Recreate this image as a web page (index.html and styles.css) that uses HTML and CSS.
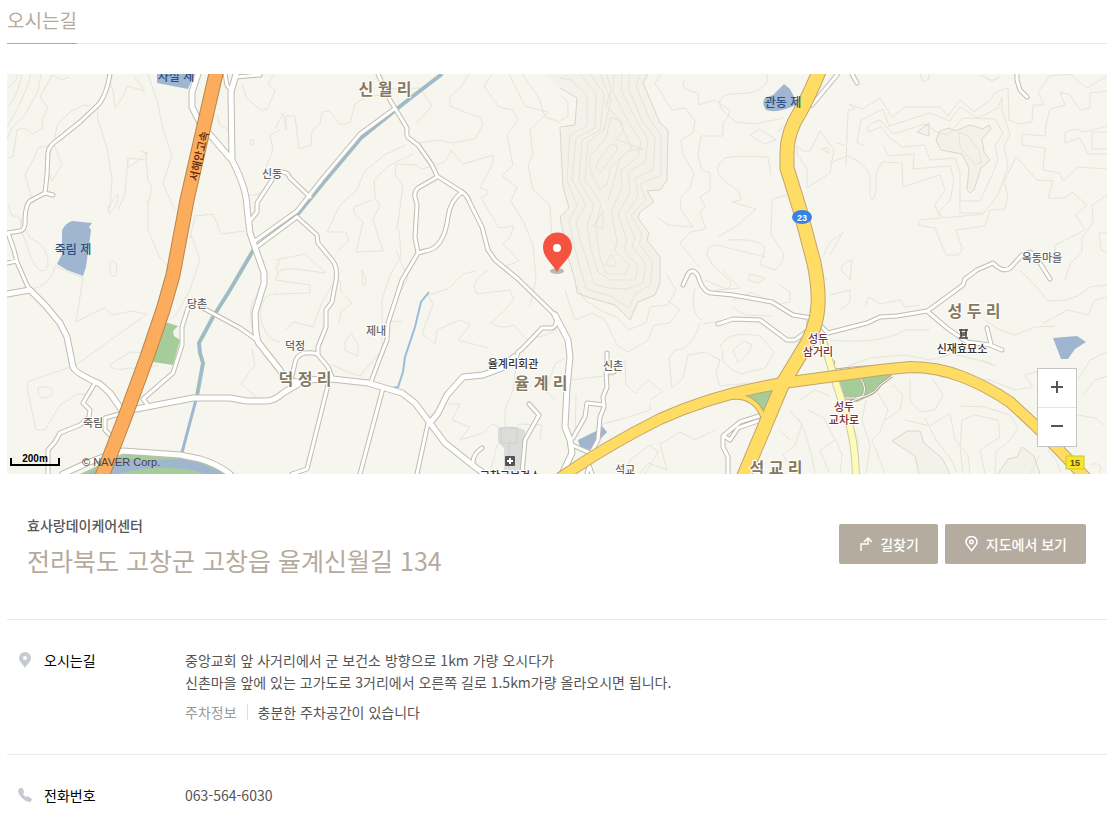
FILE: index.html
```html
<!DOCTYPE html>
<html lang="ko">

<head>
    <meta charset="UTF-8">
    <meta name="viewport" content="width=device-width, initial-scale=1.0">
    <title>오시는길</title>
    <link rel="stylesheet" href="styles.css">
</head>

<body>
    <header class="page-header">
        <h1 class="page-title">오시는길</h1>
    </header>

    <div class="map">
        <svg class="map-canvas" viewBox="7 74 1100 400" preserveAspectRatio="xMidYMid slice" role="img" aria-label="지도">
            <!-- hills -->
            <path class="hill" d="M560 88L577 98L575 125L565 125L560 133L563 187L569 208L560 217L568 257L575 280L577 293L587 297L615 305L630 320L638 302L655 295L660 283V257L647 240L649 233L638 218L640 212L654 202L647 191L660 190L667 180L668 130L660 123L643 83L648 74H545Z"/>
            <path class="hill" d="M936 140L940 131L949 128L955 131L965 127L970 125L983 129L989 125L991 129L982 139L984 152L990 160L981 168L974 190L970 193L967 190L969 168L962 154L941 150Z"/>
            <path class="hill" d="M917 132L929 123V136Z"/>
            <path class="hill" d="M892 441L907 431H920L924 443L942 458L950 474H919L915 456Z"/>
            <path class="hill" d="M998 474L1008 459L1017 457L1022 447L1034 456L1040 474Z"/>

            <!-- contours -->
            <g class="contour">
                <path d="M7 89Q15 84 18 74M7 108Q18 96 22 74M7 127Q24 100 31 74M7 139L12 128L25 115L38 91L41 74M7 158L13 157L17 130L25 128L32 134L43 128L42 119L48 108L40 97L52 75L62 80L69 77"/>
                <path d="M33 203L25 175L34 158L38 148L54 144L57 125L70 112L84 105L91 106M97 104L98 120L107 148L112 180L110 208M54 145L62 165L52 181L47 168"/>
                <path d="M107 74L113 90L115 108L122 98L127 86L145 91L133 75M148 74L158 104L163 130L172 155L163 184L175 210M128 158V168L140 159L147 152L146 160L148 180L152 188L148 205M140 151L146 153V160L128 158L125 193L118 210"/>
                <path d="M217 115L220 125L229 130L228 133M242 84L246 97L262 111L268 108L275 90L268 84L275 74M250 140Q254 138 254 144Q251 147 250 140M248 195Q260 198 268 183M280 130L270 135L273 150L263 175"/>
                <path d="M8 205L12 216H18L30 238Q50 246 48 266Q42 279 31 258L25 240Q19 228 21 219M109 214Q120 202 118 194L108 207ZM148 200L148 230L160 258L170 268M190 238L195 216L213 214L221 234L245 231M191 235L200 259L190 290L176 315L170 320"/>
                <path d="M55 266L83 278L76 322L93 313L105 308L112 315L132 311L147 314L108 342L76 365L27 382L28 392L36 430L45 430L60 405L78 394L92 395M110 266V274Q119 282 116 263Q108 258 110 266M30 290Q52 285 55 266"/>
                <path d="M38 388Q46 385 53 390Q52 397 46 398Q37 399 38 388M145 353L130 352L110 365Q113 372 129 368L145 369L158 365M258 294Q245 305 255 342M277 295Q263 290 260 315Q264 340 280 342M252 349L255 365L241 384L258 399M280 260Q273 270 280 277"/>
                <path d="M275 129L283 113L286 130V116H295L299 149L311 145L312 131L320 124L322 112L329 111L341 125L350 122L355 104L366 97L380 95L387 89L420 88L432 106L416 123"/>
                <path d="M275 260L305 254L326 273L302 270Q275 265 276 280L310 285V293L275 294M327 232L340 205L357 190L364 172L384 155L406 145M372 200L354 207V213L363 222L356 252L383 251L373 220L380 205L375 198L374 180L388 166L413 154M327 232H346L349 241L337 251"/>
                <path d="M469 74L460 88L450 97V106L462 111L480 117L483 125L475 139L451 143L440 140L418 143M397 230L403 185L395 175L396 164L416 165L422 169L445 162L451 150L463 164L493 155V163L480 188L487 190V195L481 198L499 228L514 226L510 237L503 244L519 261L500 268"/>
                <path d="M492 74L484 86L499 107L513 110L518 120L507 135L513 165L502 176L517 187L511 201L524 223L533 245L536 280L530 306M509 74L525 106L548 112L530 130L533 155L528 165L533 190L550 205L552 240M522 74L539 98L545 117L560 122M396 250L408 278L395 303L390 321L402 322M399 230L401 256L390 275L382 300V350L360 376L350 373L332 365"/>
                <path d="M285 330L294 322L313 327L322 302L332 285M340 280L341 292L352 303L341 312L339 323M345 342L351 333L358 345V356L345 350ZM362 270Q370 284 363 286ZM422 334L433 304L428 295L448 289L463 274L475 271M422 334L435 344L437 330L460 320L470 325L458 340L488 348"/>
                <path d="M448 404H460L452 420L470 427L460 440L483 433L492 424L505 430V410L513 390L518 350M488 270Q468 282 477 294L510 290L514 300L505 310L491 323Q500 330 514 325L527 340L546 335L557 330M490 474L497 445L520 424L542 425L540 440M565 358L555 364L546 390L555 400"/>
                <path d="M661 74L655 83L672 110L685 108L695 121L693 133L681 140L683 154L694 173L690 188L680 198L681 210L693 227L668 225L657 217M684 80Q679 90 698 93L699 105L714 100L730 110L728 117L723 123V136H701L698 155L702 170L710 173V190L700 197L705 206L700 213L706 229L690 232L680 243L700 268"/>
                <path d="M767 74V82Q762 91 748 93L730 94Q714 97 722 110L736 122L755 124L784 118M750 135L760 129L776 140L764 144ZM778 132L783 126M771 175L768 157Q735 155 725 158Q711 168 723 180L738 190L741 200L732 202L756 209L738 225L718 237M771 235L772 199L787 195"/>
                <path d="M728 240Q762 238 765 249L760 265L775 270L782 262L784 254L770 233M766 257L728 248Q707 240 707 255L714 267L727 278Q735 286 726 289L705 280M722 270L740 288L716 290"/>
                <path d="M797 145L802 151H810L820 131L834 150L830 173L807 188V169L797 154ZM822 149L828 148L829 153ZM843 233L830 242L823 257L815 265L827 280"/>
                <path d="M695 288Q689 315 703 320M703 324L730 319M733 300L752 292L775 305L790 302V292L780 285M732 307L745 315L771 316M748 280L758 283L765 278L750 274ZM733 350L744 341L752 345L747 355L738 363ZM720 348Q725 330 760 336L774 352L765 368L741 374Q718 365 723 350"/>
                <path d="M576 285L585 300L600 310L618 318L628 330L646 323L650 307L668 305L676 290L667 275M565 290L575 320L592 313L605 320L617 345L628 352L648 340L654 325L669 323L680 310L667 300M700 322Q693 350 675 350L669 358L672 388L683 378L688 355L705 352L720 360L716 373L720 386L750 383"/>
                <path d="M570 380L613 375L625 360L626 385L635 393L648 380L663 392L651 399M576 395L575 440M600 425L625 418L650 410L650 403M625 474L630 460L650 445L658 452L645 474M640 474L648 463L667 470L660 444L680 432L695 440L715 430"/>
                <path d="M800 400L815 390L830 396M790 410L802 425L795 445L783 455L795 474M780 430L790 440M808 410L824 418L835 440L820 450L830 474M798 418Q810 440 815 474M836 440L842 455L840 474"/>
                <path d="M846 165L848 110L855 109L849 104L863 109L880 98L892 117L905 107H940L948 116L960 100L974 112L990 100L996 92L1008 88L1009 120L1018 124L1032 122L1033 105L1044 105L1038 92L1050 76L1070 74L1087 88L1107 76"/>
                <path d="M865 146L857 143L861 120L883 109L889 126L930 113L950 121L960 107L978 118L998 108L1002 97L1002 110L1010 134L1004 146L1008 167L998 195L984 213H960V172L955 158L930 160L925 145L902 147L890 138L881 127L868 132Q864 125 880 120L893 134L925 124L937 132L948 135L963 118L995 119L1003 133L995 145L998 160L992 175L980 201H959"/>
                <path d="M830 163L848 156Q866 164 870 176V195Q872 205 876 192L876 173L882 162L902 163L903 187L940 175L945 190L935 205L940 218L920 220L918 225L935 228L946 255H959L962 248L956 230L985 226L990 210L1005 209L1008 196L1004 182L1016 157L1026 168L1037 180L1053 181L1048 198L1065 198L1072 192L1087 205L1075 215L1085 230L1065 240L1055 245L1054 260"/>
                <path d="M837 143L845 145M883 145L888 156L914 154L913 169L950 166L954 180L950 201L938 212L943 218L983 214M1107 91L1090 93V108L1080 110L1070 95L1060 92L1065 105L1050 109L1046 125L1045 136L1022 134V145L1045 148L1043 170L1060 173L1063 181L1078 167L1107 169M1107 126L1085 132L1075 129L1065 132V143L1080 138L1088 154H1107M1107 132H1092V149H1107"/>
                <path d="M1107 195L1092 205L1093 222L1082 238V252L1070 264L1065 280M1107 233H1099L1101 250L1107 253M1020 270L1034 284L1048 301L1065 300L1078 296L1090 287L1107 285M1043 323L1068 310L1088 315L1095 300L1107 297M985 320L1000 330L1015 335L1035 327L1055 326M830 295L850 290V302L840 310M830 255L843 232M852 260Q842 262 841 270L850 280Z"/>
                <path d="M865 306L869 297L880 304L900 300L905 307L920 305M848 366L870 358L905 355L930 360L952 354L978 360L996 366L982 360M940 377L990 380L1015 390L1033 387L1025 375L1038 371M1078 380L1090 360L1107 352M1083 395L1095 380L1107 376M1077 415L1095 418L1104 425"/>
                <path d="M845 404L858 440L857 474M866 400L862 420L870 445L866 474M878 393L888 410L880 432L872 440L885 474M893 385L903 395L900 410L885 420M910 380V400L920 412L935 410L943 395L932 378M905 420L930 426L950 413L955 440L968 455L970 474M963 474L960 447L962 420L975 415L998 420L1000 437L980 450L985 474M995 474L996 452L1010 440L1018 428L1010 415L985 407L960 406M925 418L936 440L950 458L958 474M1030 474L1040 455M1062 474L1056 460L1048 450"/>
                <path d="M1091 465Q1098 461 1101 468L1099 474M959 132L968 136L979 150L981 163L975 164L960 148ZM920 74L923 82L929 79V74M980 75L992 81L1000 77M830 340Q880 345 905 330L930 330"/>
            </g>
            <g class="contour ridge">
                <path d="M560 88L577 98L575 125L560 127L563 187L569 208L560 217L568 257L575 280L577 293L587 297L615 305L630 320L638 302L655 295L660 283V257L647 240L649 233L638 218L640 212L654 202L647 191L660 190L667 180L668 130L660 123L643 83L648 74"/>
                <path d="M936 140L940 131L949 128L955 131L965 127L970 125L983 129L989 125L991 129L982 139L984 152L990 160L981 168L974 190L970 193L967 190L969 168L962 154L941 150Z"/>
                <path d="M917 132L929 123V136Z"/>
                <path d="M919 474L915 456L892 441L907 431H920L924 443L942 458L950 474M998 474L1008 459L1017 457L1022 447L1034 456L1040 474"/>
            </g>
            <g class="contour">
                <path d="M640 74L636 86L650 120L661 135V175L640 184L646 200L631 215L642 235L639 244L653 262L650 285L635 294L629 308L610 296L586 289L580 268L574 245L569 220L577 206L567 180L570 135L587 126V95L571 80L560 78"/>
                <path d="M630 74L628 88L642 120L655 138L653 170L635 178L638 196L625 215L635 238L632 246L646 264L643 282L628 289L608 288L594 284L587 260L580 240L576 222L586 205L572 180L576 138L595 128L596 94L580 74"/>
                <path d="M622 74L621 90L633 114L648 140L645 162L628 172L630 192L618 214L627 240L624 250L638 266L635 280L610 280L598 272L591 250L587 225L594 206L579 180L582 140L600 130L604 94L590 74"/>
                <path d="M614 74L613 92L625 116L641 142L638 157L621 170L622 188L611 212L617 240L615 251L629 265L625 274L606 274L601 260L597 240L596 225L601 204L585 180L588 142L604 130L611 100L600 74"/>
                <path d="M607 74L611 90L606 106L618 118L632 148L620 158L614 180L608 200M611 117L622 122L623 132L615 139L643 149L628 151L611 166L607 184L600 190L590 170L590 156L606 138Z"/>
                <path d="M596 168L597 163L610 145Q617 142 617 150L601 172ZM593 226L603 211V228ZM605 265L611 254L616 263V267ZM560 95L568 102V116L560 121"/>
            </g>

            <!-- parks and water -->
            <path class="park" d="M165 322L178 326L173 331L174 336L180 340L173 365L153 362Z"/>
            <path class="park" d="M746 396L778 388L764 412ZM838 381L892 374L872 395L857 402L845 398Z"/>
            <path class="park" d="M80 474L123 454L180 457L206 462L235 474Z"/>
            <g class="water">
                <path d="M157 74H194L188 89L157 83Z"/>
                <path d="M62 231Q64 224 72 221L92 223L89 227L91 230L86 267L83 276L67 270L57 264L62 254Z"/>
                <path d="M784 84L790 89L798 104Q778 114 766 110Q761 103 765 98L773 95Z"/>
                <path d="M1053 338L1077 336L1086 342L1075 349L1068 359H1061Z"/>
                <path d="M578 440L600 429L602 426L607 432L590 450L580 447Z"/>
                <path d="M87 474L123 458L145 461L180 459L200 463L225 474H205Q180 466 150 468L115 474Z"/>
            </g>
            <path class="bank" d="M442 74L408 100L361 138L324 182L298 214M255 247L230 290L213 317L199 343L200 353L203 363L197 396"/>
            <path class="river" d="M442 74L408 100L361 138L324 182L298 214L256 246L230 290L213 317L199 343L200 353L203 363L197 396L180 460"/>
            <path class="stream" d="M429 292L421 302L415 327L405 357L403 372L398 387L392 388M382 395L360 474"/>

            <path class="building" d="M498 428Q511 424 525 430V440L522 474H504V448L498 442Z"/>
            <path class="building-line" d="M501 428H517V443H501ZM509 443V468"/>

            <!-- minor roads: casing first, then fill -->
            <defs>
                <g id="small-roads">
                    <path d="M110 74L108 84Q104 98 99 104L80 122L60 138Q48 146 48 153L47 175L45 193L53 195M45 193L30 201Q26 204 25 218Q26 230 20 231L7 233M8 233L14 250L17 262L27 285L30 290M7 263L17 261"/>
                    <path d="M95 383L83 403L90 410L89 417L80 425L60 433L55 442L48 450V474M147 404L143 399L173 373L182 345L182 327L188 308M203 308L240 328L257 340M123 413L105 418V430L110 435"/>
                    <path d="M225 74L227 85L232 92M236 77L260 75M272 180L257 203V212L250 221M282 172Q288 172 290 178L310 197"/>
                    <path d="M255 241L297 211L323 178L360 134L394 109M258 246L297 217"/>
                    <path d="M378 74L390 100L407 128Q406 138 410 139L418 145L432 165L437 176L462 192Q467 195 470 203L482 227L488 250L495 260L518 279L557 317"/>
                    <path d="M437 177L418 188Q414 192 415 197L417 205L415 237L418 253L402 280L388 323L387 340L378 363L371 382M462 192Q450 201 448 217Q444 249 425 251L418 253"/>
                    <path d="M297 217L317 235L318 243L332 260Q338 267 336 280L332 302L326 310V327L318 347V355L328 367L332 377M318 354Q298 349 295 363L292 376M328 385L307 469L292 474M383 388L360 474M428 423L417 474"/>
                    <path d="M473 462Q473 454 482 448M529 404L539 415L525 440L522 474M557 318Q556 329 550 328L542 328L522 349L518 352L516 358"/>
                    <path d="M607 353V363M614 372H606L607 387L603 397L604 407L600 417L598 440L591 453M604 405L587 403L585 417L573 438M572 445L590 453M587 474L589 465L592 474"/>
                    <path d="M683 285L688 274Q693 267 698 276Q703 293 712 293L733 295L772 302L793 315L812 318M718 324L733 319L760 320L787 340H795L810 329M809 318V330"/>
                    <path d="M762 415L740 422L723 436V447L728 457V474M758 421L738 428L730 440L724 436M812 105L837 75M852 74L857 83M1017 74V80L1020 90L1027 97"/>
                    <path d="M820 325L828 333L867 323L880 317L897 316L927 311L933 307L963 285L965 279L977 270L993 263Q1005 275 1012 266L1022 255L1030 252L1038 260L1050 279M927 311L947 328L967 342L990 345L1002 350M987 328L991 344"/>
                </g>
                <g id="lanes">
                    <path d="M836 370Q870 365 895 367M842 398Q872 400 880 385L892 376M860 378Q868 388 862 397L850 402M834 360Q830 372 845 372"/>
                </g>
                <g id="main-roads">
                    <path d="M198 74L192 92V107L200 123L230 158M236 74L231 92L232 160Q247 189 247 208L250 233L264 273V283L255 313L256 333L258 342L280 370Q286 382 300 382"/>
                    <path d="M7 294L30 290L45 305L60 323L67 337L73 367Q75 373 100 384L110 393L121 409M131 410L193 398L230 398L247 401H267Q276 400 283 393L305 380L332 379L368 383L402 393L415 403L430 423L445 443L475 467L485 474"/>
                    <path d="M430 423L438 413L447 395L463 377L483 375L502 368L514 357M555 315L568 340L570 357L567 387L565 427L570 440L572 453L562 474"/>
                    <path d="M63 474L87 463L103 457L123 451L180 455L200 459Q217 464 230 474"/>
                </g>
                <path id="route-23" d="M820 69Q810 94 800 112Q787 132 787 153V168L800 210L814 263Q819 287 818 305Q817 330 800 355L783 383L743 478"/>
                <path id="route-15" d="M560 478Q606 446 660 419Q715 394 783 383L880 370L910 367Q938 367 963 377Q988 387 1010 402L1037 427L1088 480"/>
            </defs>
            <use class="small-case" href="#small-roads"/>
            <use class="main-case" href="#main-roads"/>
            <use class="small-fill" href="#small-roads"/>
            <use class="main-fill" href="#main-roads"/>
            <use class="lane-case" href="#lanes"/>
            <use class="lane-fill" href="#lanes"/>
            <path class="pale-case" d="M823 340L835 380L847 417Q855 440 856 474"/>
            <path class="pale-fill" d="M823 340L835 380L847 417Q855 440 856 474"/>
            <path class="ramp-case" d="M732 397Q754 395 763 416"/>
            <use class="route-case" href="#route-23"/>
            <use class="route-case narrow" href="#route-15"/>
            <path class="ramp-fill" d="M732 397Q754 395 763 416"/>
            <use class="route-fill" href="#route-23"/>
            <use class="route-fill narrow" href="#route-15"/>
            <path class="highway-case" d="M217 69L187 200L173 275L163 310L147 357L125 417L101 479"/>
            <path class="highway-fill" d="M217 69L187 200L173 275L163 310L147 357L125 417L101 479"/>

            <!-- route numbers -->
            <ellipse cx="802" cy="217" rx="10" ry="7" fill="#3682e8"/>
            <text class="route-number light" x="802" y="221">23</text>
            <rect x="1066" y="456" width="18" height="13" fill="#f5e52c" stroke="#d9c51e"/>
            <text class="route-number" x="1075" y="466">15</text>

            <!-- place names -->
            <g class="village">
                <text x="385" y="95">신 월 리</text>
                <text x="305" y="385">덕 정 리</text>
                <text x="541" y="389">율 계 리</text>
                <text x="974" y="317">성 두 리</text>
                <text x="776" y="474">석 교 리</text>
            </g>
            <g class="hamlet">
                <text x="272" y="178">신동</text>
                <text x="197" y="308">당촌</text>
                <text x="295" y="350">덕정</text>
                <text x="376" y="335">제내</text>
                <text x="93" y="427">죽림</text>
                <text x="613" y="370">신촌</text>
                <text x="625" y="474">석교</text>
                <text x="1042" y="262">옥동마을</text>
            </g>
            <g class="pond">
                <text x="176" y="81">사실 제</text>
                <text x="73" y="254">죽림 제</text>
                <text x="783" y="107">관동 제</text>
            </g>
            <g class="place">
                <text x="513" y="368">율계리회관</text>
                <text x="510" y="480">고창군보건소</text>
                <text x="962" y="353">신재효묘소</text>
            </g>
            <g class="junction">
                <text x="818" y="343">성두</text>
                <text x="818" y="356">삼거리</text>
                <text x="844" y="411">성두</text>
                <text x="844" y="424">교차로</text>
            </g>
            <text class="road-name" transform="translate(203 157) rotate(-77)">서해안고속</text>

            <rect x="505" y="456" width="10" height="10" rx="1" fill="#555"/>
            <path d="M510 458V464M507 461H513" stroke="#fff" stroke-width="2"/>
            <path d="M959 330H968M960 333H967M959 338H968M961 329V338M966 329V338M961 335H966" fill="none" stroke="#444" stroke-width="1.500"/>

            <!-- marker -->
            <ellipse cx="557" cy="271" rx="7" ry="3" fill="#b9b8b3"/>
            <path d="M557 272C553 264 543 258 543 247A14 14 0 0 1 572 247C572 258 561 264 557 272Z" fill="#f4533f"/>
            <circle cx="557" cy="248" r="4" fill="#fff"/>
        </svg>

        <div class="zoom">
            <button class="zoom-button" type="button" aria-label="확대">
                <svg width="12" height="12" viewBox="0 0 12 12"><path d="M6 0V12M0 6H12"/></svg>
            </button>
            <button class="zoom-button" type="button" aria-label="축소">
                <svg width="12" height="12" viewBox="0 0 12 12"><path d="M0 6H12"/></svg>
            </button>
        </div>
        <div class="map-info">
            <span class="scale">200m</span>
            <span class="copyright">© NAVER Corp.</span>
        </div>
    </div>

    <section class="address">
        <div class="address-text">
            <strong class="center-name">효사랑데이케어센터</strong>
            <p class="center-address">전라북도 고창군 고창읍 율계신월길 134</p>
        </div>
        <div class="actions">
            <button class="action" type="button">
                <svg width="13" height="14" viewBox="0 0 13 14"><path d="M2 14V7H9V2M5 5L9 1L13 5"/></svg>
                길찾기
            </button>
            <button class="action" type="button">
                <svg width="13" height="16" viewBox="0 0 13 16"><path d="M6.5 14.5C4.500 11.500 1 9 1 6A5.500 5.500 0 0 1 12 6C12 9 8.500 11.500 6.500 14.500Z"/><circle cx="6.500" cy="6" r="1.700"/></svg>
                지도에서 보기
            </button>
        </div>
    </section>

    <dl class="info">
        <div class="info-row">
            <dt class="info-label">
                <svg class="info-icon" width="14" height="16" viewBox="0 0 14 16"><path fill-rule="evenodd" d="M7 16C5 12 1 10 1 6A6 6 0 0 1 13 6C13 10 9 12 7 16ZM7 4A2 2 0 1 0 7 8A2 2 0 0 0 7 4Z"/></svg>
                오시는길
            </dt>
            <dd class="info-value">
                <p>중앙교회 앞 사거리에서 군 보건소 방향으로 1km 가량 오시다가<br>신촌마을 앞에 있는 고가도로 3거리에서 오른쪽 길로 1.5km가량 올라오시면 됩니다.</p>
                <p class="parking"><span class="parking-label">주차정보</span>충분한 주차공간이 있습니다</p>
            </dd>
        </div>
        <div class="info-row">
            <dt class="info-label">
                <svg class="info-icon" width="14" height="16" viewBox="0 0 14 16"><path d="M0 3L2 1Q4 0 5 2L6 5Q6 6 5 7Q6 9 8 10L9 9Q10 9 11 10L14 12Q14 14 12 15Q8 15 4 11Q0 7 0 3Z"/></svg>
                전화번호
            </dt>
            <dd class="info-value">063-564-6030</dd>
        </div>
    </dl>
</body>

</html>
```

FILE: styles.css
```css
body {
    margin: 0;
    padding: 0 8px 0 7px;
    font-family: "Noto Sans CJK KR", "Noto Sans", sans-serif;
    font-size: 14px;
    line-height: 22px;
    color: #555;
    background-color: #fff;
}

p,
dl,
dd {
    margin: 0;
}

button {
    font-family: inherit;
    cursor: pointer;
}

.page-header {
    display: flex;
    margin-bottom: 30px;
    box-shadow: inset 0 -1px #e9e9e9;
}

.page-title {
    margin: 0;
    padding: 5px 0 8px;
    font-size: 19px;
    font-weight: 400;
    line-height: 30px;
    color: #b5aa9e;
    border-bottom: 1px solid #b5aa9e;
}

/* map */
.map {
    position: relative;
    height: 400px;
    overflow: hidden;
    background-color: #f6f5ee;
}

.map-canvas {
    display: block;
    width: 100%;
    height: 100%;
    fill: none;
}

.hill {
    fill: #f3f2ea;
}

.contour {
    stroke: #e6e5dc;
}

.ridge {
    stroke: #d9d8cf;
}

.park {
    fill: #a5cd99;
}

.water {
    fill: #a0b6d0;
}

.bank {
    stroke: #a9d09a;
    stroke-width: 4;
}

.river {
    stroke: #9fb8d2;
    stroke-width: 3;
}

.stream {
    stroke: #9dbcdb;
    stroke-width: 2;
}

.building {
    fill: #dcdddb;
}

.building-line {
    stroke: #cccfcd;
}

.small-case,
.main-case {
    stroke: #bfbcb1;
    stroke-width: 5;
    stroke-linecap: round;
    stroke-linejoin: round;
}

.main-case {
    stroke-width: 7;
}

.small-fill,
.main-fill {
    stroke: #fff;
    stroke-width: 3;
    stroke-linecap: round;
    stroke-linejoin: round;
}

.main-fill {
    stroke-width: 5;
}

.lane-case {
    stroke: #b9ab98;
    stroke-width: 3;
}

.lane-fill {
    stroke: #fff;
    stroke-width: 1;
}

.pale-case {
    stroke: #cfcbaa;
    stroke-width: 8;
}

.pale-fill {
    stroke: #fefbb8;
    stroke-width: 6;
}

.ramp-case {
    stroke: #c4a45f;
    stroke-width: 6;
}

.ramp-fill {
    stroke: #ffdc64;
    stroke-width: 4;
}

.route-case {
    stroke: #c4a46c;
    stroke-width: 15;
}

.route-fill {
    stroke: #ffdc64;
    stroke-width: 13;
}

.route-case.narrow {
    stroke-width: 12;
}

.route-fill.narrow {
    stroke-width: 10;
}

.highway-case {
    stroke: #b98549;
    stroke-width: 15;
}

.highway-fill {
    stroke: #fbac5c;
    stroke-width: 13;
}

.map-canvas text {
    font-size: 11px;
    font-weight: 500;
    text-anchor: middle;
    stroke: #fff;
    stroke-width: 2px;
    paint-order: stroke;
}

.map-canvas .village text {
    font-size: 16px;
    font-weight: 700;
    fill: #85795f;
}

.hamlet {
    fill: #666;
}

.map-canvas .pond text {
    font-size: 12px;
    fill: #2c4f82;
    stroke: none;
}

.place {
    fill: #333;
}

.junction {
    fill: #7a3038;
}

.map-canvas .road-name {
    fill: #5c2610;
    stroke: none;
}

.map-canvas .route-number {
    font-family: "Liberation Sans", Arial, sans-serif;
    font-size: 9px;
    font-weight: 700;
    fill: #554d16;
    stroke: none;
}

.map-canvas .route-number.light {
    fill: #fff;
}

.zoom {
    position: absolute;
    right: 30px;
    bottom: 27px;
    display: flex;
    flex-direction: column;
    border: 1px solid #c4c4c4;
    background-color: #fff;
}

.zoom-button {
    display: flex;
    align-items: center;
    justify-content: center;
    width: 38px;
    height: 38px;
    padding: 0 0 2px;
    border: none;
    background: none;
}

.zoom-button + .zoom-button {
    height: 39px;
    border-top: 1px solid #e5e5e5;
}

.zoom-button svg {
    stroke: #555;
    stroke-width: 2;
}

.map-info {
    position: absolute;
    left: 3px;
    bottom: 4px;
    display: flex;
    align-items: flex-end;
    gap: 22px;
    font-family: "Liberation Sans", Arial, sans-serif;
    font-size: 11px;
    line-height: 16px;
    color: #444;
}

.scale {
    position: relative;
    width: 50px;
    margin-bottom: 4px;
    font-size: 10px;
    font-weight: 700;
    line-height: 15px;
    text-align: center;
    color: #000;
}

/* ruler below the distance */
.scale::after {
    content: "";
    position: absolute;
    left: 0;
    right: 0;
    bottom: 0;
    height: 6px;
    border: 2px solid #000;
    border-top: none;
}

/* address */
.address {
    display: flex;
    justify-content: space-between;
    padding: 40px 21px 41px 20px;
    border-bottom: 1px solid #e9e9e9;
}

.center-name {
    font-weight: 500;
}

.center-address {
    margin-top: 6px;
    font-size: 25px;
    line-height: 36px;
    color: #b5aa9e;
}

.actions {
    display: flex;
    align-items: flex-start;
    gap: 7px;
    margin-top: 10px;
}

.action {
    display: flex;
    align-items: center;
    gap: 8px;
    height: 40px;
    padding: 0 19px 1px 20px;
    font-size: 14px;
    font-weight: 500;
    color: #fff;
    white-space: nowrap;
    background-color: #b5aca0;
    border: none;
    border-radius: 2px;
}

.action svg {
    fill: none;
    stroke: #fff;
    stroke-width: 1.5;
}

/* details */
.info-row {
    display: flex;
    padding: 29px 11px 31px;
    border-bottom: 1px solid #e9e9e9;
}

.info-row:last-child {
    padding-bottom: 0;
    border-bottom: none;
}

.info-label {
    display: flex;
    align-items: center;
    gap: 12px;
    flex: 0 0 167px;
    height: 22px;
    color: #000;
}

.info-icon {
    fill: #c5cad3;
}

.parking {
    display: flex;
    align-items: center;
    margin-top: 8px;
}

.parking-label {
    margin-right: 10px;
    padding-right: 10px;
    line-height: 16px;
    color: #999;
    border-right: 1px solid #ddd;
}
```
